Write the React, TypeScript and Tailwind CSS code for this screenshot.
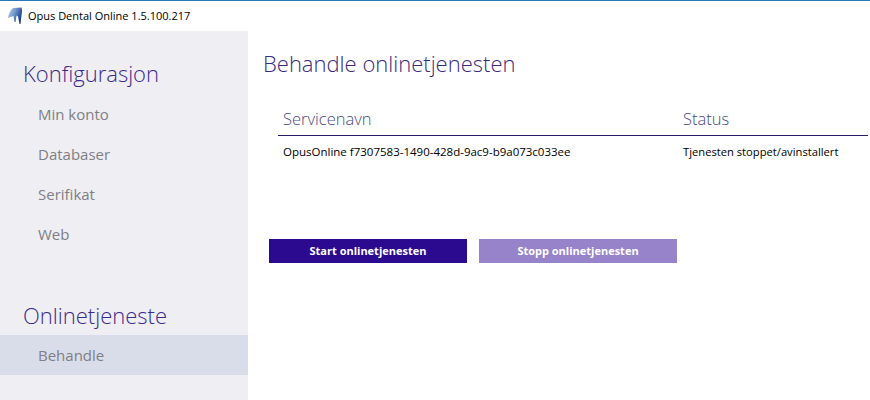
import React from 'react';

const font = "font-['Open_Sans','Noto_Sans',sans-serif]";

const ToothLogo = () => (
  <svg width="16" height="18" viewBox="0 0 16 18">
    <defs>
      <linearGradient id="tooth" x1="0" y1="0" x2="1" y2="0.5">
        <stop offset="0" stopColor="#c4d5ec" />
        <stop offset="0.5" stopColor="#6f97cf" />
        <stop offset="1" stopColor="#143f86" />
      </linearGradient>
    </defs>
    <path
      d="M6 1 L14.5 0.5 C15.5 3 15 6 14.5 8 L13.5 17 L12.5 17 L11 9.5 L9.5 8.5 L8.5 15 L7.5 15 L6.5 9 L1 11 C1.5 7 3 3.5 6 1 Z"
      fill="url(#tooth)"
    />
  </svg>
);

const NavItem: React.FC<{ label: string; active?: boolean }> = ({ label, active }) => (
  <div className={`h-10 pl-[38px] flex items-center text-[15px] text-[#7f7f86] ${active ? 'bg-[#d9dde9]' : ''}`}>
    {label}
  </div>
);

export default function App() {
  return (
    <div className={`w-[870px] h-[400px] overflow-hidden flex flex-col bg-white ${font}`}>
      <div className="h-[31px] shrink-0 border-t border-t-[#2a7ab8] flex items-center pl-[7px] gap-[5px] text-[11px] text-black">
        <ToothLogo />
        <span>Opus Dental Online 1.5.100.217</span>
      </div>
      <div className="flex-1 flex">
        <aside className="w-[248px] shrink-0 bg-[#eeeef3] flex flex-col pt-[24px]">
          <h2 className="pl-[23px] text-[22px] leading-[36px] font-light text-[#3a2a8c]">Konfigurasjon</h2>
          <nav className="mt-[3px] flex flex-col">
            <NavItem label="Min konto" />
            <NavItem label="Databaser" />
            <NavItem label="Serifikat" />
            <NavItem label="Web" />
          </nav>
          <h2 className="mt-[43px] pl-[23px] text-[22px] leading-[36px] font-light text-[#3a2a8c]">Onlinetjeneste</h2>
          <nav className="mt-[2px] flex flex-col">
            <NavItem label="Behandle" active />
          </nav>
        </aside>
        <main className="flex-1 pt-[15px] pl-[15px]">
          <h1 className="text-[22px] leading-[34px] font-light text-[#3a2a7c]">Behandle onlinetjenesten</h1>
          <div className="mt-[18px] ml-[15px] w-[590px]">
            <div className="flex h-[38px] items-center pt-[6px] border-b border-b-[#2a1a6c] text-[16.5px] font-light text-[#4a4a80]">
              <div className="w-[405px] pl-[5px]">Servicenavn</div>
              <div>Status</div>
            </div>
            <div className="flex h-[32px] items-center text-[11.5px] text-black">
              <div className="w-[405px] pl-[5px]">OpusOnline f7307583-1490-428d-9ac9-b9a073c033ee</div>
              <div className="text-[11.2px]">Tjenesten stoppet/avinstallert</div>
            </div>
          </div>
          <div className="mt-[71px] ml-[6px] flex gap-[12px]">
            <button className="w-[198px] h-6 bg-[#2b0a8f] text-white text-[11px] font-bold">Start onlinetjenesten</button>
            <button className="w-[198px] h-6 bg-[#9683c9] text-white text-[11px] font-bold">Stopp onlinetjenesten</button>
          </div>
        </main>
      </div>
    </div>
  );
}
